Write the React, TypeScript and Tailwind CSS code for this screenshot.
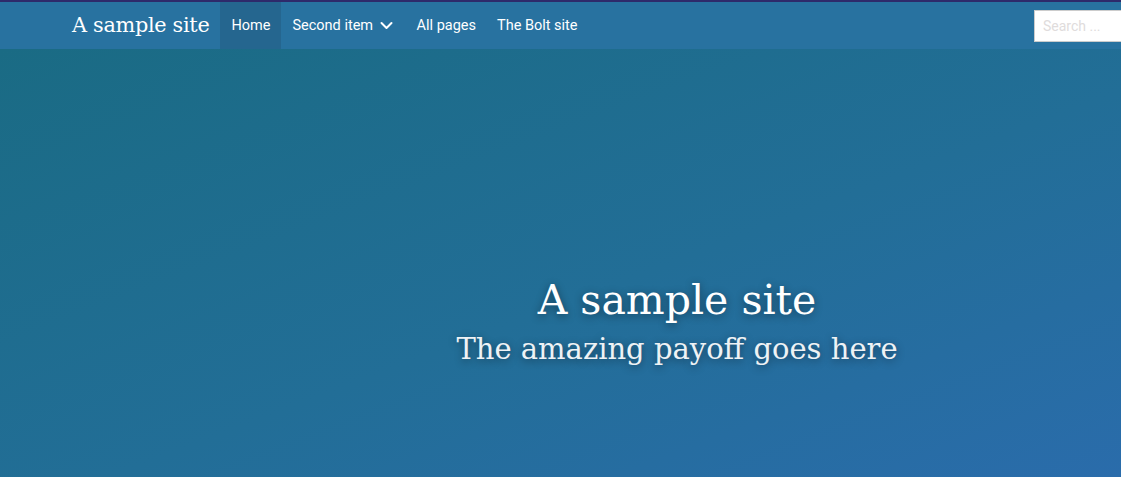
import React from "react";

export default function App() {
  const serif = { fontFamily: '"DejaVu Serif", "Liberation Serif", serif' };
  return (
    <div className="w-[1121px] h-[477px] overflow-hidden" style={{ fontFamily: 'Roboto, "Liberation Sans", sans-serif' }}>
      <div className="border-t-2 border-[#2e2a6b] bg-[#2872a0] h-[49px] flex items-stretch relative overflow-hidden">
        <div className="pl-[72px] pr-[11px] flex items-center">
          <span className="text-white text-[20.8px] tracking-[-0.3px]" style={serif}>A sample site</span>
        </div>
        <div className="flex items-stretch text-[14.5px] text-white">
          <a className="px-[11px] flex items-center bg-[#25668f]">Home</a>
          <a className="pl-[11px] pr-[13px] flex items-center gap-[7px]">
            Second item
            <svg width="13" height="9" viewBox="0 0 13 9" fill="none">
              <path d="M1.5 2l5 5 5-5" stroke="white" strokeWidth="2" strokeLinecap="round" strokeLinejoin="round" />
            </svg>
          </a>
          <a className="px-[10.5px] flex items-center">All pages</a>
          <a className="px-[10.5px] flex items-center">The Bolt site</a>
        </div>
        <div className="ml-auto flex items-center mr-[-20px]">
          <input
            placeholder="Search ..."
            className="w-[107px] h-[32px] bg-white border border-[#cccccc] px-[8px] text-[14px] placeholder:text-[#e0dcdc] outline-none"
            style={{ fontFamily: 'Roboto, sans-serif' }}
          />
        </div>
      </div>
      <div className="h-[428px] bg-[linear-gradient(to_bottom_right,#1a6b84,#226e97_55%,#2a6cab)] flex flex-col items-center pl-[233px] pt-[226px]">
        <h1 className="text-white text-[41px] leading-[50px] [text-shadow:0_2px_8px_rgba(0,0,0,0.45)]" style={serif}>
          A sample site
        </h1>
        <p className="mt-[5px] text-[#eef2f5] text-[29px] leading-[38px] [text-shadow:0_2px_8px_rgba(0,0,0,0.45)]" style={serif}>
          The amazing payoff goes here
        </p>
      </div>
    </div>
  );
}
